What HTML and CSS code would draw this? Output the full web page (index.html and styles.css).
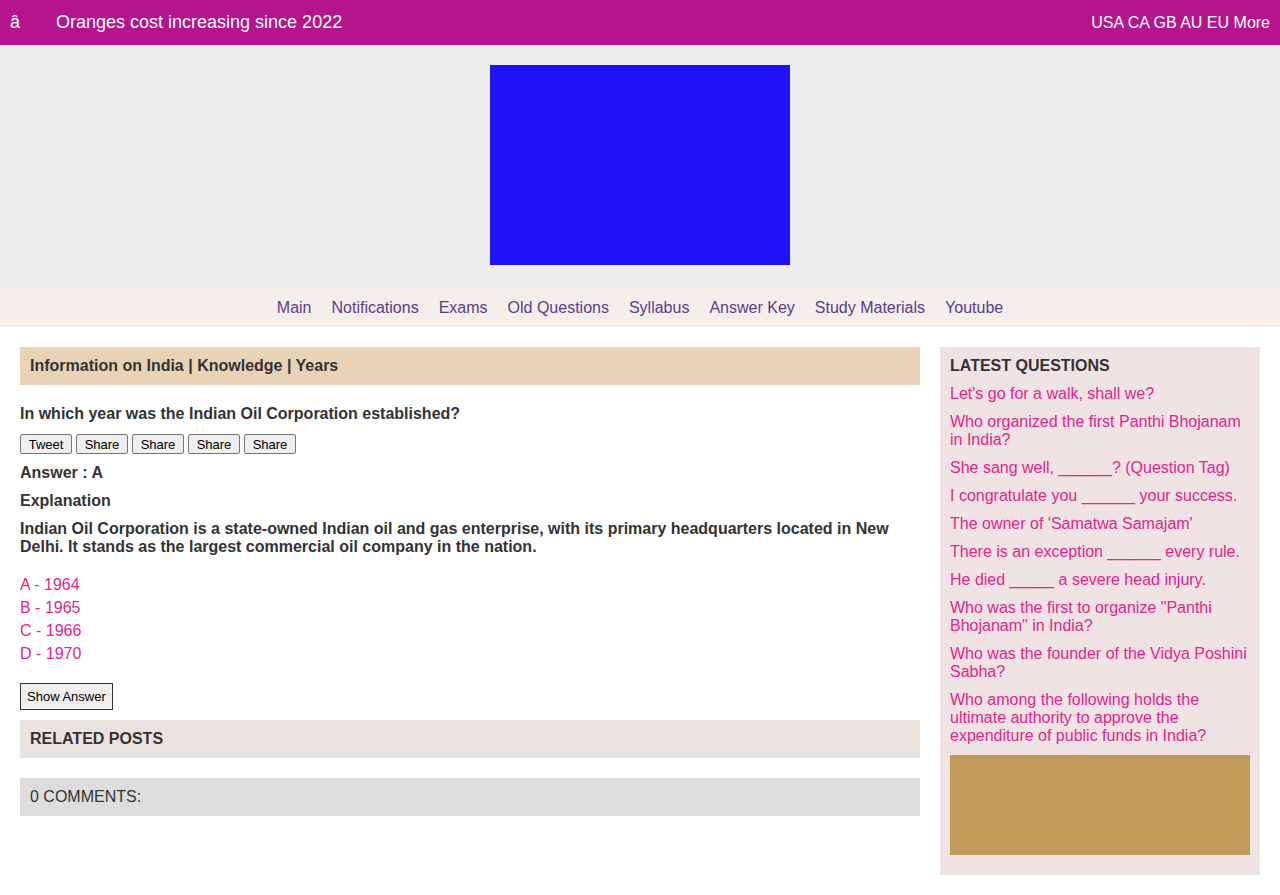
FILE: index.html
```html
<!DOCTYPE html>
<html>
<head>
<meta charset="utf-8">
<link rel="stylesheet" href="styles.css">
</head>
<body>
<div class="topbar">
  <div class="top-left">
    <span class="top-icon">â</span>
    <span class="top-headline">Oranges cost increasing since 2022</span>
  </div>
  <div class="top-right">
    <a href="#">USA</a> <a href="#">CA</a> <a href="#">GB</a> <a href="#">AU</a> <a href="#">EU</a> <a href="#">More</a>
  </div>
</div>
<div class="header">
  <div class="banner"></div>
</div>
<nav class="nav">
  <a href="#">Main</a>
  <a href="#">Notifications</a>
  <a href="#">Exams</a>
  <a href="#">Old Questions</a>
  <a href="#">Syllabus</a>
  <a href="#">Answer Key</a>
  <a href="#">Study Materials</a>
  <a href="#">Youtube</a>
</nav>
<div class="main">
  <div class="content">
    <div class="crumbs">Information on India | Knowledge | Years</div>
    <h1 class="question">In which year was the Indian Oil Corporation established?</h1>
    <div class="share">
      <button class="sbtn">Tweet</button> <button class="sbtn">Share</button> <button class="sbtn">Share</button> <button class="sbtn">Share</button> <button class="sbtn">Share</button>
    </div>
    <div class="answer">Answer : A</div>
    <div class="answer">Explanation</div>
    <p class="explain">Indian Oil Corporation is a state-owned Indian oil and gas enterprise, with its primary headquarters located in New Delhi. It stands as the largest commercial oil company in the nation.</p>
    <div class="options">
      <div>A - 1964</div>
      <div>B - 1965</div>
      <div>C - 1966</div>
      <div>D - 1970</div>
    </div>
    <button class="show-btn">Show Answer</button>
    <div class="related">RELATED POSTS</div>
    <div class="comments">0 COMMENTS:</div>
  </div>
  <aside class="sidebar">
    <div class="side-title">LATEST QUESTIONS</div>
    <a class="side-link" href="#">Let's go for a walk, shall we?</a>
    <a class="side-link" href="#">Who organized the first Panthi Bhojanam in India?</a>
    <a class="side-link" href="#">She sang well, ______? (Question Tag)</a>
    <a class="side-link" href="#">I congratulate you ______ your success.</a>
    <a class="side-link" href="#">The owner of 'Samatwa Samajam'</a>
    <a class="side-link" href="#">There is an exception ______ every rule.</a>
    <a class="side-link" href="#">He died _____ a severe head injury.</a>
    <a class="side-link" href="#">Who was the first to organize "Panthi Bhojanam" in India?</a>
    <a class="side-link" href="#">Who was the founder of the Vidya Poshini Sabha?</a>
    <a class="side-link" href="#">Who among the following holds the ultimate authority to approve the expenditure of public funds in India?</a>
    <div class="side-ad"></div>
  </aside>
</div>
</body>
</html>
```

FILE: styles.css
```css
* { box-sizing: border-box; }
body {
  margin: 0;
  font-family: "Liberation Sans", Arial, sans-serif;
  font-size: 16px;
  color: #333;
  background: #fff;
}
a { text-decoration: none; }

.topbar {
  height: 45px;
  background: #b5148c;
  color: #fff;
  display: flex;
  align-items: center;
  justify-content: space-between;
  padding: 0 10px;
}
.top-left { display: flex; align-items: center; gap: 36px; font-size: 18px; }
.top-icon { width: 10px; }
.top-right { font-size: 16px; }
.top-right a { color: #fff; }

.header {
  background: #eeeeee;
  padding: 20px 0 23px;
  display: flex;
  justify-content: center;
}
.banner { width: 300px; height: 200px; background: #1f12f6; }

.nav {
  background: #f4efeb;
  height: 39px;
  display: flex;
  justify-content: center;
  align-items: center;
  gap: 20px;
}
.nav a { color: #5a3d8e; font-size: 16px; }

.main {
  display: flex;
  gap: 20px;
  padding: 20px;
  align-items: flex-start;
}
.content { width: 900px; }
.crumbs {
  background: #e9d3b7;
  font-weight: bold;
  padding: 10px;
  line-height: 18px;
}
.question {
  font-size: 16px;
  font-weight: bold;
  line-height: 18px;
  margin: 20px 0 11px;
}
.share { line-height: 0; font-size: 0; display: flex; gap: 4px; }
.sbtn {
  font-family: "Liberation Sans", Arial, sans-serif;
  font-size: 13px;
  line-height: 15px;
  padding: 1px 4px;
  min-width: 52px;
  text-align: center;
  border: 1px solid #767676;
  border-radius: 2px;
  background: #efefef;
  color: #000;
  height: 20px;
}
.answer {
  font-weight: bold;
  line-height: 18px;
  margin-top: 10px;
}
.explain {
  font-weight: bold;
  line-height: 18px;
  margin: 10px 0 17px;
}
.options { color: #e8238b; line-height: 23px; }
.show-btn {
  margin-top: 18px;
  display: block;
  font-family: "Liberation Sans", Arial, sans-serif;
  font-size: 13px;
  height: 27px;
  padding: 0 6px;
  border: 1px solid #333;
  border-radius: 0;
  background: #efefef;
  color: #000;
}
.related {
  margin-top: 10px;
  background: #e9e4e0;
  font-weight: bold;
  padding: 10px;
  line-height: 18px;
}
.comments {
  margin-top: 20px;
  background: #dddddd;
  padding: 10px;
  line-height: 18px;
}

.sidebar {
  width: 320px;
  background: #f0e3e4;
  padding: 10px 10px 20px;
  display: flex;
  flex-direction: column;
  gap: 10px;
}
.side-title { font-weight: bold; line-height: 18px; }
.side-link { color: #e8238b; line-height: 18px; }
.side-ad { height: 100px; background: #c09a58; }
```
